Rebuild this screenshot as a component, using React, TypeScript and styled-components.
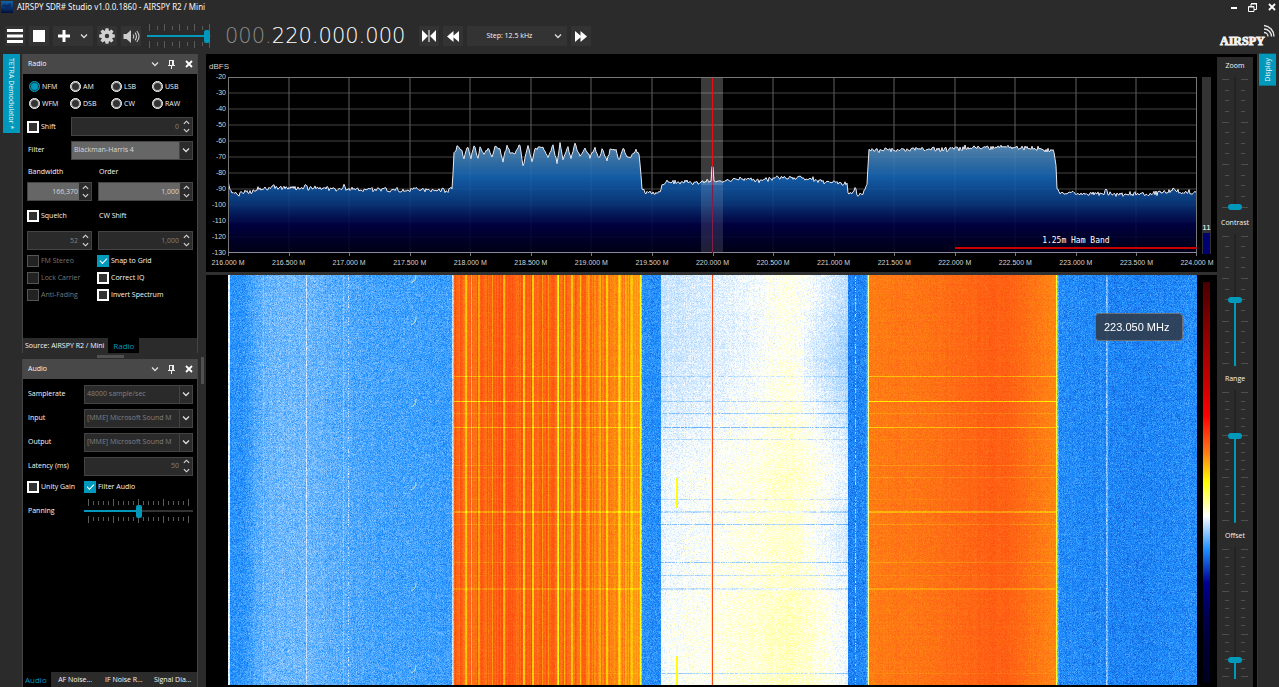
import React, { useEffect, useId, useRef, useState } from "react";
import styled, { createGlobalStyle, css } from "styled-components";

const c = {
  chrome: "#2b2b2b",
  raised: "#333333",
  header: "#484848",
  line: "#444444",
  accent: "#0099bc",
  text: "#f6f6f6",
  dim: "#777777",
};

const GlobalStyle = createGlobalStyle`
  *, *::before, *::after { box-sizing: border-box; }
  body {
    margin: 0;
    background: ${c.chrome};
    color: ${c.text};
    font: 7px/10px "Open Sans", "Noto Sans", sans-serif;
  }
  button, input, select { font: inherit; color: inherit; margin: 0; border-radius: 0; }
  button { border: 0; padding: 0; }
  svg { display: block; flex: none; }
`;

/* ---------- shell ---------- */

const Shell = styled.div`
  display: flex;
  flex-direction: column;
  height: 100vh;
  min-height: 600px;
  overflow: hidden;
`;

const TitleBar = styled.header`
  display: flex;
  align-items: center;
  justify-content: space-between;
  height: 14px;
  flex: none;
  padding: 0 2px 0 1px;
`;

const AppTitle = styled.h1`
  display: flex;
  align-items: center;
  gap: 4px;
  margin: 0;
  font-family: "Noto Sans", sans-serif;
  font-weight: 400;
  font-size: 8px;
  line-height: 14px;
`;

const WindowButtons = styled.div`
  display: flex;
  gap: 8px;
`;

const PlainButton = styled.button`
  display: grid;
  place-items: center;
  background: none;
  width: 11px;
  height: 12px;
`;

const Toolbar = styled.div`
  display: flex;
  align-items: center;
  gap: 4px;
  height: 40px;
  flex: none;
  padding: 4px 4px 0 5px;
`;

const ToolButton = styled.button`
  display: grid;
  place-items: center;
  width: 20px;
  height: 20px;
  background: ${c.raised};
`;

const SplitButton = styled.div`
  display: flex;
  justify-content: flex-end;
  background: ${c.raised};
  button:first-child { width: 22px; }
  button:last-child { width: 18px; }
`;

const Frequency = styled.output`
  margin: 0 10px 0 9px;
  font: 200 21px/24px "DejaVu Sans", sans-serif;
  color: #ffffff;
  white-space: nowrap;
`;

const MutedDigits = styled.span`
  color: #8a8a8a;
`;

const StepPicker = styled.label`
  display: grid;
  align-items: center;
  width: 100px;
  height: 20px;
  background: ${c.raised};
  > * { grid-area: 1 / 1; }
  > svg { justify-self: end; margin-right: 5px; pointer-events: none; }
`;

const StepSelect = styled.select`
  appearance: none;
  border: 0;
  background: none;
  height: 20px;
  padding: 0 16px 0 0;
  text-align: center;
`;

const Logo = styled.div`
  margin-left: auto;
`;

const VolumeSlot = styled.div`
  width: 65px;
  margin-left: 2px;
`;

const Workspace = styled.main`
  display: flex;
  flex: 1;
  min-height: 0;
`;

const DockStrip = styled.div<{ $side: "left" | "right" }>`
  width: 22px;
  flex: none;
  padding-left: ${(p) => (p.$side === "left" ? 3 : 1)}px;
  ${(p) => p.$side === "right" && css`border-left: 1px solid #3a3a3a;`}
`;

const DockTab = styled.button<{ $up?: boolean }>`
  width: 17px;
  padding: 4px 0;
  background: ${c.accent};
  line-height: 17px;
  white-space: nowrap;
  writing-mode: vertical-rl;
  ${(p) => p.$up && css`transform: rotate(180deg);`}
`;

/* ---------- side panels ---------- */

const Sidebar = styled.aside`
  display: flex;
  flex-direction: column;
  width: 176px;
  flex: none;
`;

const Splitter = styled.div<{ $vertical?: boolean }>`
  display: grid;
  place-items: center;
  flex: none;
  ${(p) => (p.$vertical ? css`width: 8px;` : css`height: 6px;`)}
  &::after {
    content: "";
    background: #505050;
    ${(p) => (p.$vertical ? css`width: 3px; height: 27px;` : css`width: 27px; height: 3px;`)}
  }
`;

const Panel = styled.section<{ $grow?: boolean }>`
  display: flex;
  flex-direction: column;
  ${(p) => (p.$grow ? css`flex: 1; min-height: 0;` : css`flex: none; height: 299px;`)}
  border: 1px solid ${c.line};
  border-width: 0 1px;
`;

const PanelHeader = styled.div`
  display: flex;
  align-items: center;
  gap: 6px;
  height: 20px;
  flex: none;
  padding: 0 3px 0 5px;
  background: ${c.header};
`;

const PanelTitle = styled.h2`
  flex: 1;
  margin: 0;
  font-size: inherit;
  font-weight: 400;
`;

const PanelBody = styled.div<{ $pad: number }>`
  flex: 1;
  min-height: 0;
  padding: ${(p) => p.$pad}px 4px 0;
  background: #000000;
`;

const Tabs = styled.div`
  display: flex;
  height: 15px;
  flex: none;
`;

const Tab = styled.button<{ $active?: boolean; $wide?: boolean; $first?: boolean }>`
  background: ${(p) => (p.$active ? "#000000" : c.chrome)};
  color: ${(p) => (p.$active ? c.accent : c.text)};
  padding: 0 ${(p) => (p.$first ? 4 : 5)}px 0 ${(p) => (p.$first ? 2 : 5)}px;
  white-space: nowrap;
  ${(p) => p.$active && css`font-size: 8px;`}
  ${(p) => p.$wide && css`flex: 1;`}
`;

const ModeGrid = styled.div`
  display: grid;
  grid-template-columns: repeat(4, 1fr);
  grid-auto-rows: 17px;
  margin: 0 0 5px 2px;
`;

const Check = styled.label<{ $off?: boolean }>`
  display: flex;
  align-items: center;
  gap: 2px;
  white-space: nowrap;
  color: ${(p) => (p.$off ? c.dim : c.text)};
`;

const RadioDot = styled.input`
  appearance: none;
  width: 11px;
  height: 11px;
  margin: 0;
  flex: none;
  border: 1px solid #ffffff;
  border-radius: 50%;
  background: ${c.raised};
  box-shadow: inset 0 0 0 1px #bbbbbb;
  &:checked {
    border-color: ${c.accent};
    background: ${c.accent};
    box-shadow: inset 0 0 0 1px #123c48;
  }
`;

const Box = styled.input`
  appearance: none;
  display: grid;
  place-items: center;
  width: 12px;
  height: 12px;
  flex: none;
  border: 2px solid #ffffff;
  background: ${c.raised};
  &:disabled { border: 1px solid #555555; background: #222222; }
  &:checked { border: 0; background: ${c.accent}; }
  &:checked::before {
    content: "";
    width: 7px;
    height: 4px;
    border: solid #ffffff;
    border-width: 0 0 1px 1px;
    transform: translateY(-1px) rotate(-45deg);
  }
`;

const FormRow = styled.div<{ $cols: string; $h: number }>`
  display: grid;
  grid-template-columns: ${(p) => p.$cols};
  align-items: center;
  column-gap: 6px;
  height: ${(p) => p.$h}px;
`;

const Caption = styled.label`
  padding-left: 1px;
  white-space: nowrap;
`;

const FieldFrame = styled.div<{ $lit?: boolean }>`
  display: flex;
  height: 19px;
  min-width: 0;
  border: 1px solid ${c.line};
  background: ${(p) => (p.$lit ? "#666666" : "#2a2a2a")};
  color: ${(p) => (p.$lit ? "#d8d8d8" : "#808080")};
`;

const NumberInput = styled.input`
  flex: 1;
  width: 0;
  min-width: 0;
  border: 0;
  padding: 0 1px;
  background: none;
  text-align: right;
`;

const SelectInput = styled.select`
  appearance: none;
  flex: 1;
  width: 0;
  min-width: 0;
  border: 0;
  padding: 0 0 0 2px;
  background: none;
  text-overflow: clip;
  opacity: 1;
`;

const Spinner = styled.div`
  display: flex;
  flex-direction: column;
  width: 12px;
  background: ${c.chrome};
  button { flex: 1; display: grid; place-items: center; background: none; }
`;

const ArrowBox = styled.span`
  display: grid;
  place-items: center;
  width: 13px;
  border-left: 1px solid ${c.line};
  background: ${c.chrome};
`;

/* ---------- sliders ---------- */

const HSlider = styled.div<{ $inset: number }>`
  display: grid;
  height: 24px;
  > * { grid-area: 1 / 1; }
  > div { margin: 0 ${(p) => p.$inset}px; }
`;

const HTicks = styled.div`
  display: flex;
  justify-content: space-between;
`;

const HTick = styled.i<{ $long: boolean }>`
  width: 1px;
  display: flex;
  flex-direction: column;
  justify-content: space-between;
  margin: ${(p) => (p.$long ? 0 : 2)}px 0;
  &::before, &::after {
    content: "";
    height: ${(p) => (p.$long ? 7 : 4)}px;
    background: #5a5a5a;
  }
`;

const HRange = styled.input<{ $fill: number }>`
  appearance: none;
  width: 100%;
  height: 24px;
  min-width: 0;
  background: linear-gradient(to right, ${c.accent} ${(p) => p.$fill}%, #333333 ${(p) => p.$fill}%) center / 100% 2px no-repeat;
  &::-webkit-slider-thumb {
    appearance: none;
    width: 6px;
    height: 13px;
    border-radius: 2px;
    background: ${c.accent};
  }
`;

const RailSlot = styled.div`
  display: flex;
  flex: none;
  background: #000000;
`;

const DisplayRail = styled.div`
  display: flex;
  flex-direction: column;
  width: 36px;
  flex: none;
  margin: 3px 4px 0 0;
  padding-bottom: 4px;
  background: ${c.chrome};
`;

const RailSection = styled.div`
  display: flex;
  flex-direction: column;
  flex: 1;
  min-height: 0;
  padding-bottom: 4px;
`;

const RailLabel = styled.label`
  height: 20px;
  line-height: 17px;
  text-align: center;
`;

const VSlider = styled.div`
  display: grid;
  flex: 1;
  min-height: 0;
  justify-items: center;
  > * { grid-area: 1 / 1; }
`;

const VTicks = styled.div`
  display: flex;
  flex-direction: column;
  justify-content: space-between;
  width: 26px;
  padding: 2px 0;
`;

const VTick = styled.i<{ $long: boolean }>`
  display: flex;
  justify-content: space-between;
  height: 1px;
  margin: 0 ${(p) => (p.$long ? 0 : 3)}px;
  &::before, &::after {
    content: "";
    width: ${(p) => (p.$long ? 7 : 4)}px;
    background: #4e4e4e;
  }
`;

const VRange = styled.input`
  appearance: none;
  writing-mode: vertical-lr;
  direction: rtl;
  width: 14px;
  height: 100%;
  min-height: 0;
  &::-webkit-slider-thumb {
    appearance: none;
    width: 14px;
    height: 6px;
    border-radius: 3px;
    background: ${c.accent};
  }
`;

/* ---------- spectrum and waterfall ---------- */

const Scope = styled.div`
  display: flex;
  flex: 1;
  min-width: 0;
  flex-direction: column;
  background: #000000;
  font: 7px/8px "Liberation Sans", Arial, sans-serif;
  color: #d4d4d4;
`;

const ScopeRow = styled.div<{ $grow?: boolean }>`
  display: grid;
  grid-template-columns: 22px minmax(0, 1fr) 20px;
  ${(p) => p.$grow && css`flex: 1; min-height: 0; padding-bottom: 2px;`}
`;

const Unit = styled.div`
  height: 23px;
  padding: 9px 0 0 3px;
  font-size: 8px;
`;

const DbScale = styled.div`
  display: flex;
  flex-direction: column;
  justify-content: space-between;
  height: 184px;
  margin-top: -4px;
  padding-right: 2px;
  text-align: right;
`;

const Plot = styled.div`
  position: relative;
  height: 180px;
  min-width: 0;
`;

const PlotSvg = styled.svg`
  width: 100%;
  height: 180px;
`;

const Band = styled.div`
  position: absolute;
  left: 75%;
  right: 0;
  bottom: 8px;
  border-bottom: 2px solid #c80000;
  padding-bottom: 1px;
  text-align: center;
  font: 8px/10px "DejaVu Sans Mono", monospace;
  color: #ffffff;
`;

const FreqScale = styled.div`
  display: flex;
  justify-content: space-between;
  height: 15px;
  margin: 0 20px 0 22px;
  padding-top: 2px;
  white-space: nowrap;
  span { width: 0; display: flex; justify-content: center; }
`;

const Divider = styled.div`
  height: 3px;
  flex: none;
  background: #303030;
`;

const Meter = styled.div`
  display: flex;
  flex-direction: column;
  justify-content: flex-end;
  width: 9px;
  height: 177px;
  margin-left: 5px;
  background: ${c.raised};
  color: #ffffff;
  font-size: 8px;
  text-align: center;
  &::after { content: ""; height: 21px; margin: 1px 1px 0; background: #000070; }
`;

const FallBox = styled.div`
  position: relative;
  min-height: 0;
`;

const FallCanvas = styled.canvas`
  display: block;
  width: 100%;
  height: 100%;
`;

const Palette = styled.div`
  width: 7px;
  margin: 7px 0 2px 6px;
  background: linear-gradient(
    #4a0000, #750000, #9f0000, #c60000, #ff0000, #fe6d16, #ffff00,
    #ffffff, #1e90ff, #000091, #000050, #000030, #000020
  );
`;

const Readout = styled.div`
  position: absolute;
  top: 38px;
  right: 14px;
  width: 88px;
  padding: 0 8px;
  border: 1px solid #6b6f78;
  border-radius: 4px;
  background: rgba(48, 60, 76, 0.9);
  color: #ffffff;
  font-size: 11px;
  line-height: 26px;
  white-space: nowrap;
`;

/* ---------- icons ---------- */

const Chevron = ({ up, size = 8 }: { up?: boolean; size?: number }) => (
  <svg width={size} height={size} viewBox="0 0 8 8" fill="none" stroke="#dddddd" strokeWidth="1.3">
    <path d={up ? "M1 5.5 4 2.5 7 5.5" : "M1 2.5 4 5.5 7 2.5"} />
  </svg>
);

const CloseIcon = () => (
  <svg width="8" height="8" viewBox="0 0 8 8" stroke="#ffffff" strokeWidth="1.8">
    <path d="M1 1 7 7M7 1 1 7" />
  </svg>
);

const PinIcon = () => (
  <svg width="7" height="9" viewBox="0 0 7 9" fill="none" stroke="#eeeeee">
    <path d="M1.500 .5H5.500M1.500 0V5M4.500 0V5M5.500 0V5M0 5.500H7M3.500 5V9" />
  </svg>
);

const AppIcon = () => (
  <svg width="12" height="12" viewBox="0 0 12 12">
    <defs>
      <linearGradient id="appicon" x1="0" y1="0" x2="0" y2="1">
        <stop offset="0" stopColor="#1462a8" />
        <stop offset="1" stopColor="#00103c" />
      </linearGradient>
    </defs>
    <rect width="12" height="12" fill="url(#appicon)" />
    <path d="M1 5q2-3 5-1l4-2-1 4 1 3-3-1-3 1 1-2z" fill="#0a2c66" />
  </svg>
);

const GearIcon = () => (
  <svg width="16" height="16" viewBox="-8 -8 16 16" fill="#d0d0d0">
    {[0, 45, 90, 135].map((a) => (
      <path key={a} d="M-1.400-7.800H1.400L2-5V5L1.400 7.800H-1.400L-2 5V-5z" transform={`rotate(${a})`} />
    ))}
    <circle r="5.600" />
    <circle r="2.200" fill="#333333" />
  </svg>
);

const SpeakerIcon = () => (
  <svg width="17" height="15" viewBox="0 0 17 15" fill="none" stroke="#cccccc" strokeWidth="1.100">
    <path d="M.5 5H3.500L8 1V14L3.500 10H.5z" fill="#cccccc" stroke="none" />
    <path d="M10 5.500q1.500 2 0 4M12 3.700q3 3.800 0 7.600M13.800 2q4.400 5.500 0 11" />
  </svg>
);

const AirspyLogo = () => (
  <svg width="56" height="24" viewBox="0 0 56 24" role="img" aria-label="AIRSPY">
    <text x="1" y="21" fill="#f4f4f4" stroke="#f4f4f4" strokeWidth=".9" fontSize="12" fontWeight="700" fontFamily='"Liberation Serif", serif'>
      AIRSPY
    </text>
    <path d="M45 8.500a4 4 0 0 1 4 4M45 5a7.500 7.500 0 0 1 7.500 7.500M45 1.500a11 11 0 0 1 10 11" fill="none" stroke="#e4e4e4" strokeWidth="1.400" />
  </svg>
);

/* ---------- signal model ---------- */

const SPAN = 969;
const rng = (seed: number) => () => {
  seed = (seed + 0x6d2b79f5) | 0;
  let t = Math.imul(seed ^ (seed >>> 15), 1 | seed);
  t = (t + Math.imul(t ^ (t >>> 7), 61 | t)) ^ t;
  return ((t ^ (t >>> 14)) >>> 0) / 4294967296;
};

type Pt = [number, number];
const lerp = (pts: Pt[], x: number) => {
  if (x <= pts[0][0]) return pts[0][1];
  for (let i = 1; i < pts.length; i++) {
    if (x <= pts[i][0]) {
      const [x0, y0] = pts[i - 1];
      const [x1, y1] = pts[i];
      return y0 + ((y1 - y0) * (x - x0)) / (x1 - x0);
    }
  }
  return pts[pts.length - 1][1];
};

// Trace outline: position across the span, depth below -20 dBFS.
const TRACE: Pt[] = [
  [0, 104], [2, 113], [4, 116], [10, 117], [18, 115], [34, 111], [60, 110], [76, 111], [78, 106], [80, 111], [114, 112], [116, 108], [118, 112],
  [180, 113], [188, 111], [190, 113], [222, 113], [224, 111], [225, 96], [226, 76], [229, 70], [233, 72], [236, 81], [240, 69], [243, 82], [246, 69],
  [250, 82], [252, 69], [256, 77], [260, 71], [264, 80], [267, 70], [272, 72], [275, 85], [279, 68], [282, 75], [287, 76], [292, 67], [295, 89],
  [300, 69], [304, 85], [307, 71], [315, 70], [320, 81], [325, 68], [329, 86], [332, 66], [335, 82], [340, 70], [343, 82], [347, 67], [352, 80],
  [357, 71], [362, 80], [367, 70], [371, 82], [374, 73], [379, 84], [382, 72], [388, 74], [391, 84], [395, 71], [399, 80], [403, 80], [408, 73],
  [411, 78], [412, 87], [414, 112], [417, 115], [432, 116], [434, 108], [439, 105], [469, 106], [483, 104], [484, 89], [485, 89], [486, 104], [502, 104],
  [510, 101], [532, 104], [557, 100], [575, 101], [595, 105], [605, 105], [619, 108], [620, 117], [626, 116], [627, 110], [629, 118], [635, 116],
  [639, 108], [641, 73], [702, 72], [757, 71], [777, 70], [812, 72], [826, 75], [828, 88], [829, 112], [832, 116], [867, 117], [876, 117],
  [878, 110], [880, 117], [922, 117], [948, 113], [952, 116], [968, 116],
];

const buildTrace = () => {
  const r = rng(7);
  let d = "";
  for (let x = 0; x < SPAN; x++) {
    const comb = x > 226 && x < 411;
    const jitter = (r() + r() + r() - 1.5) * (comb ? 1.6 : 2.4);
    d += `${x ? "L" : "M"}${x} ${(lerp(TRACE, x) + jitter).toFixed(1)}`;
  }
  return d;
};
const TRACE_PATH = buildTrace();

const STOPS = [
  [0, 0, 32], [0, 0, 48], [0, 0, 80], [0, 0, 145], [30, 144, 255], [255, 255, 255], [255, 255, 0],
  [254, 109, 22], [255, 0, 0], [198, 0, 0], [159, 0, 0], [117, 0, 0], [74, 0, 0],
];

// Level across the span, in palette steps.
const LEVEL: Pt[] = [
  [0, 4.9], [1, 4.9], [2, 4.02], [16, 4.06], [30, 4.26], [50, 4.36], [80, 4.35], [110, 4.25], [150, 4.17], [223, 4.12], [224, 4.7],
  [225, 6.4], [226, 7.1], [300, 7.16], [340, 7.08], [370, 6.92], [400, 6.76], [411, 6.6], [412, 5.9], [413, 4.5], [414, 4.02], [431, 4.0],
  [432, 4.05], [433, 4.9], [460, 4.95], [480, 4.98], [500, 5.04], [530, 5.09], [545, 5.14], [557, 5.18], [578, 5.12], [595, 5.0], [619, 4.85],
  [620, 3.92], [637, 3.95], [639, 4.3], [640, 5.5], [641, 6.9], [700, 6.96], [740, 7.06], [760, 7.12], [777, 7.12], [800, 6.98], [827, 6.82],
  [828, 5.8], [829, 4.4], [831, 3.98], [880, 3.93], [920, 3.92], [968, 3.99],
];
// [position, width, change of level]
const STRIPES: [number, number, number][] = [
  [35, 1, 0.14], [78, 1, 0.36], [115, 1, 0.2], [237, 2, -0.55], [243, 1, -0.6], [250, 2, -0.5], [258, 1, -0.3], [264, 1, -0.5], [275, 2, -0.7],
  [295, 2, -0.85], [304, 2, -0.8], [314, 1, -0.3], [320, 1, -0.4], [329, 2, -0.95], [336, 1, -0.55], [343, 2, -0.65], [352, 1, -0.4],
  [360, 2, -0.3], [371, 2, -0.45], [378, 2, -0.4], [390, 3, -0.45], [397, 1, -0.25], [403, 2, -0.3], [878, 2, 0.4], [872, 1, 0.12],
];
// [row, rows tall, orange-band change, pale-band change]
const STREAKS: [number, number, number, number][] = [
  [101, 1, 0.5, 0.25], [126, 1, 0.8, 0.32], [138, 1, 0.2, 0.4], [152, 1, 0.55, 0.55], [164, 1, 0.1, 0.3], [190, 1, 0.22, 0],
  [202, 1, 0.18, 0], [224, 1, 0.05, 0.25], [236, 2, 0.42, 0.28], [249, 1, 0.2, 0.5], [287, 1, 0.25, 0.5], [300, 1, 0.1, 0.35],
  [313, 2, 0.28, 0.28], [398, 1, 0.1, 0.4],
];
// Slow drift of the pale band with age.
const DRIFT: Pt[] = [[0, -0.14], [60, -0.17], [110, -0.12], [160, -0.04], [200, 0.03], [250, 0.02], [290, 0.03], [350, 0.1], [409, 0.07]];

const drawFall = (cv: HTMLCanvasElement) => {
  const w = Math.max(1, cv.clientWidth);
  const h = Math.max(1, cv.clientHeight);
  cv.width = w;
  cv.height = h;
  const g = cv.getContext("2d");
  if (!g) return;
  const r = rng(21);
  const img = g.createImageData(w, h);
  const cols: number[] = [];
  for (let px = 0; px < w; px++) {
    const x = (px * SPAN) / w;
    let t = lerp(LEVEL, x) + (r() - 0.5) * (x > 226 && x < 411 ? 0.36 : 0.06);
    for (const [sx, sw, dv] of STRIPES) if (x >= sx && x < sx + sw) t += dv;
    cols.push(t);
  }
  for (let y = 0; y < h; y++) {
    const row = (r() - 0.5) * 0.04;
    const streak = STREAKS.find((s) => y >= s[0] && y < s[0] + s[1]);
    const fade = lerp(DRIFT, y);
    for (let px = 0; px < w; px++) {
      const x = (px * SPAN) / w;
      let t = cols[px] + row;
      const n = r() + r() + r() - 1.5;
      const pale = x >= 433 && x < 620;
      const hot = (x >= 226 && x < 412) || (x >= 640 && x < 828);
      if (hot) {
        t += n * 0.12;
        if (streak) t -= streak[2];
      } else if (pale) {
        const centre = Math.max(0, 1 - Math.abs(x - 557) / 55);
        t += fade * (fade < 0 ? 1 - centre * 0.4 : 1) + n * 0.17;
        if (x > 575) t -= 0.12 * Math.max(0, 1 - Math.abs(y - 90) / 70) + 0.08 * Math.max(0, 1 - Math.abs(y - 260) / 50);
        if (streak && r() > 0.12) t -= streak[3];
      } else {
        t += n * 0.24;
        if (x >= 120 && x < 121 && r() > 0.55) t += 0.45;
        if (x >= 627 && x < 628 && r() > 0.45) t += 0.6;
        if (x >= 878 && x < 879 && r() > 0.6) t += 0.3;
      }
      if (x >= 448 && x < 450 && ((y > 202 && y < 233) || y > 380)) t = 5.95;
      if (x >= 483 && x < 484) t = 5.8;
      t = Math.max(3.4, Math.min(8.2, t));
      const i = Math.floor(t);
      const f = t - i;
      const a = STOPS[i];
      const b = STOPS[i + 1];
      const o = (y * w + px) * 4;
      for (let k = 0; k < 3; k++) img.data[o + k] = a[k] + (b[k] - a[k]) * f;
      img.data[o + 3] = 255;
    }
  }
  g.putImageData(img, 0, 0);
  const k = w / SPAN;
  g.fillStyle = "#ff4a10";
  g.fillRect(Math.round(484 * k), 0, 1, h);
  g.fillStyle = "rgba(40,160,180,.5)";
  g.fillRect(Math.round(843 * k), 0, 1, h);
  g.fillRect(Math.round(863 * k), 0, 1, h);
  g.strokeStyle = "#d8e8b0";
  for (const y of [0, 42, 124, 207, 308, 390]) {
    g.beginPath();
    g.moveTo(188 * k, y);
    g.quadraticCurveTo(188 * k, y + 6, 183 * k, y + 8);
    g.stroke();
  }
};

/* ---------- composed controls ---------- */

const Toggle = ({ label, on, off }: { label: string; on?: boolean; off?: boolean }) => (
  <Check $off={off}>
    <Box type="checkbox" defaultChecked={on} disabled={off} />
    {label}
  </Check>
);

const NumField = ({ id, name, value, lit }: { id?: string; name?: string; value: string; lit?: boolean }) => (
  <FieldFrame $lit={lit}>
    <NumberInput id={id} aria-label={name} type="text" inputMode="numeric" defaultValue={value} />
    <Spinner>
      <button type="button" aria-label="Increase"><Chevron up size={7} /></button>
      <button type="button" aria-label="Decrease"><Chevron size={7} /></button>
    </Spinner>
  </FieldFrame>
);

const PickField = ({ id, value, lit }: { id: string; value: string; lit?: boolean }) => (
  <FieldFrame $lit={lit}>
    <SelectInput id={id} defaultValue={value}><option>{value}</option></SelectInput>
    <ArrowBox><Chevron /></ArrowBox>
  </FieldFrame>
);

const Horizontal = ({ id, name, initial, ticks, every, inset }: {
  id?: string; name?: string; initial: number; ticks: number; every: number; inset: number;
}) => {
  const [v, setV] = useState(initial);
  return (
    <HSlider $inset={inset}>
      <HTicks>{Array.from({ length: ticks }, (_, i) => <HTick key={i} $long={i % every === 0} />)}</HTicks>
      <HRange id={id} aria-label={name} type="range" value={v} $fill={v} onChange={(e) => setV(+e.target.value)} />
    </HSlider>
  );
};

const Vertical = ({ name, initial, ticks, every }: { name: string; initial: number; ticks: number; every: number }) => {
  const id = useId();
  const [v, setV] = useState(initial);
  const fill = `calc(3px + (100% - 6px) * ${v / 100})`;
  return (
    <RailSection>
      <RailLabel htmlFor={id}>{name}</RailLabel>
      <VSlider>
        <VTicks>{Array.from({ length: ticks }, (_, i) => <VTick key={i} $long={i % every === 0} />)}</VTicks>
        <VRange
          id={id}
          type="range"
          value={v}
          onChange={(e) => setV(+e.target.value)}
          style={{ background: `linear-gradient(to top, ${c.accent} ${fill}, #222222 ${fill}) center / 2px 100% no-repeat` }}
        />
      </VSlider>
    </RailSection>
  );
};

const Head = ({ title }: { title: string }) => (
  <PanelHeader>
    <PanelTitle>{title}</PanelTitle>
    <PlainButton type="button" aria-label={`${title} menu`}><Chevron /></PlainButton>
    <PlainButton type="button" aria-label={`Pin ${title}`}><PinIcon /></PlainButton>
    <PlainButton type="button" aria-label={`Close ${title}`}><CloseIcon /></PlainButton>
  </PanelHeader>
);

const MODES = ["NFM", "AM", "LSB", "USB", "WFM", "DSB", "CW", "RAW"];

const RadioPanel = () => (
  <Panel>
    <Head title="Radio" />
    <PanelBody $pad={4}>
      <ModeGrid role="radiogroup" aria-label="Mode">
        {MODES.map((m) => (
          <Check key={m}>
            <RadioDot type="radio" name="mode" defaultChecked={m === "NFM"} />
            {m}
          </Check>
        ))}
      </ModeGrid>
      <FormRow $cols="38px 1fr" $h={19}>
        <Toggle label="Shift" />
        <NumField name="Shift" value="0" />
      </FormRow>
      <FormRow $cols="38px 1fr" $h={28}>
        <Caption htmlFor="filter">Filter</Caption>
        <PickField id="filter" value="Blackman-Harris 4" lit />
      </FormRow>
      <FormRow $cols="65px 1fr" $h={16}>
        <Caption htmlFor="bandwidth">Bandwidth</Caption>
        <Caption htmlFor="order">Order</Caption>
      </FormRow>
      <FormRow $cols="65px 1fr" $h={23}>
        <NumField id="bandwidth" value="166,370" lit />
        <NumField id="order" value="1,000" lit />
      </FormRow>
      <FormRow $cols="65px 1fr" $h={26}>
        <Toggle label="Squelch" />
        <Caption htmlFor="cwshift">CW Shift</Caption>
      </FormRow>
      <FormRow $cols="65px 1fr" $h={23}>
        <NumField name="Squelch" value="52" />
        <NumField id="cwshift" value="1,000" />
      </FormRow>
      <FormRow $cols="64px 1fr" $h={17}>
        <Toggle label="FM Stereo" off />
        <Toggle label="Snap to Grid" on />
      </FormRow>
      <FormRow $cols="64px 1fr" $h={17}>
        <Toggle label="Lock Carrier" off />
        <Toggle label="Correct IQ" />
      </FormRow>
      <FormRow $cols="64px 1fr" $h={17}>
        <Toggle label="Anti-Fading" off />
        <Toggle label="Invert Spectrum" />
      </FormRow>
    </PanelBody>
    <Tabs>
      <Tab type="button" $first>Source: AIRSPY R2 / Mini</Tab>
      <Tab type="button" $active>Radio</Tab>
    </Tabs>
  </Panel>
);

const AudioPanel = () => (
  <Panel $grow>
    <Head title="Audio" />
    <PanelBody $pad={3}>
      <FormRow $cols="51px 1fr" $h={24}>
        <Caption htmlFor="rate">Samplerate</Caption>
        <PickField id="rate" value="48000 sample/sec" />
      </FormRow>
      <FormRow $cols="51px 1fr" $h={24}>
        <Caption htmlFor="input">Input</Caption>
        <PickField id="input" value="[MME] Microsoft Sound M" />
      </FormRow>
      <FormRow $cols="51px 1fr" $h={24}>
        <Caption htmlFor="output">Output</Caption>
        <PickField id="output" value="[MME] Microsoft Sound M" />
      </FormRow>
      <FormRow $cols="51px 1fr" $h={24}>
        <Caption htmlFor="latency">Latency (ms)</Caption>
        <NumField id="latency" value="50" />
      </FormRow>
      <FormRow $cols="51px 1fr" $h={17}>
        <Toggle label="Unity Gain" />
        <Toggle label="Filter Audio" on />
      </FormRow>
      <FormRow $cols="51px 1fr" $h={32}>
        <Caption htmlFor="pan">Panning</Caption>
        <Horizontal id="pan" initial={50} ticks={21} every={5} inset={4} />
      </FormRow>
    </PanelBody>
    <Tabs>
      <Tab type="button" $active $first>Audio</Tab>
      <Tab type="button" $wide>AF Noise...</Tab>
      <Tab type="button" $wide>IF Noise R...</Tab>
      <Tab type="button" $wide>Signal Dia...</Tab>
    </Tabs>
  </Panel>
);

const Spectrum = () => (
  <Plot>
    <PlotSvg viewBox="0 0 969 180" preserveAspectRatio="none">
      <defs>
        <linearGradient id="fill" x1="0" y1="0" x2="0" y2="176" gradientUnits="userSpaceOnUse">
          <stop offset=".38" stopColor="#5f93bf" />
          <stop offset=".46" stopColor="#3f7db4" />
          <stop offset=".57" stopColor="#1565b5" />
          <stop offset=".7" stopColor="#0b4088" />
          <stop offset=".84" stopColor="#000044" />
          <stop offset="1" stopColor="#000018" />
        </linearGradient>
      </defs>
      {Array.from({ length: 10 }, (_, i) => (
        <path key={i} d={`M0 ${16 * (i + 1)}H969`} stroke="#444444" />
      ))}
      {Array.from({ length: 15 }, (_, i) => i !== 7 && (
        <path key={i} d={`M${Math.round((969 / 16) * (i + 1))} 0V176`} stroke="#606060" />
      ))}
      <path d={`${TRACE_PATH}V176H0Z`} fill="url(#fill)" fillOpacity=".9" />
      <path d={TRACE_PATH} fill="none" stroke="#e8e8f0" />
      <path d="M0 .5H969M.5 0V176M968.500 0V176" stroke="#777777" fill="none" />
      <path d="M0 175.500H969" stroke="#8a8a9a" />
      {Array.from({ length: 17 }, (_, i) => (
        <path key={i} d={`M${Math.min(968, Math.round((969 / 16) * i)) + 0.5} 176v3`} stroke="#777777" />
      ))}
      <path d="M484.500 89V176" stroke="#700030" />
      <rect x="473" y="1" width="22" height="107" fill="#ffffff" fillOpacity=".23" />
      <rect x="473" y="108" width="22" height="67" fill="#ffffff" fillOpacity=".12" />
      <path d="M484.500 1V89" stroke="#e81010" />
    </PlotSvg>
    <Band>1.25m Ham Band</Band>
  </Plot>
);

const Waterfall = () => {
  const ref = useRef<HTMLCanvasElement>(null);
  useEffect(() => {
    const paint = () => ref.current && drawFall(ref.current);
    paint();
    window.addEventListener("resize", paint);
    return () => window.removeEventListener("resize", paint);
  }, []);
  return (
    <FallBox>
      <FallCanvas ref={ref} aria-label="Waterfall" />
      <Readout>223.050 MHz</Readout>
    </FallBox>
  );
};

export default function App() {
  return (
    <Shell>
      <GlobalStyle />
      <TitleBar>
        <AppTitle><AppIcon />AIRSPY SDR# Studio v1.0.0.1860 - AIRSPY R2 / Mini</AppTitle>
        <WindowButtons>
          <PlainButton type="button" aria-label="Minimize">
            <svg width="8" height="8" viewBox="0 0 8 8"><path d="M1 4H7V6H1z" fill="#ffffff" /></svg>
          </PlainButton>
          <PlainButton type="button" aria-label="Restore">
            <svg width="9" height="9" viewBox="0 0 9 9" fill="none" stroke="#ffffff"><path d="M.5 3.500H6V8.500H.5zM.5 4H6M3 3V1H8.500V6.500H6M3 .5H9" /></svg>
          </PlainButton>
          <PlainButton type="button" aria-label="Close"><CloseIcon /></PlainButton>
        </WindowButtons>
      </TitleBar>

      <Toolbar>
        <ToolButton type="button" aria-label="Menu">
          <svg width="16" height="14" viewBox="0 0 16 14" fill="#ffffff"><path d="M0 0H16V3H0zM0 5.500H16V8.500H0zM0 11H16V14H0z" /></svg>
        </ToolButton>
        <ToolButton type="button" aria-label="Stop">
          <svg width="12" height="12" viewBox="0 0 12 12"><path d="M0 0H12V12H0z" fill="#ffffff" /></svg>
        </ToolButton>
        <SplitButton>
          <ToolButton type="button" aria-label="Add">
            <svg width="12" height="12" viewBox="0 0 12 12"><path d="M4.500 0H7.500V4.500H12V7.500H7.500V12H4.500V7.500H0V4.500H4.500z" fill="#ffffff" /></svg>
          </ToolButton>
          <ToolButton type="button" aria-label="Add options"><Chevron /></ToolButton>
        </SplitButton>
        <ToolButton type="button" aria-label="Settings"><GearIcon /></ToolButton>
        <ToolButton type="button" aria-label="Mute"><SpeakerIcon /></ToolButton>
        <VolumeSlot><Horizontal name="Volume" initial={97} ticks={9} every={2} inset={2} /></VolumeSlot>
        <Frequency><MutedDigits>000.</MutedDigits>220.000.000</Frequency>
        <ToolButton type="button" aria-label="Center">
          <svg width="14" height="12" viewBox="0 0 14 12" fill="#ffffff"><path d="M0 0 6 6 0 12zM14 0 8 6 14 12zM6.500 0H7.500V12H6.500z" /></svg>
        </ToolButton>
        <ToolButton type="button" aria-label="Step down">
          <svg width="12" height="11" viewBox="0 0 12 11" fill="#ffffff"><path d="M6.500 0V11L0 5.500zM12 0V11L5.500 5.500z" /></svg>
        </ToolButton>
        <StepPicker>
          <StepSelect aria-label="Step"><option>Step: 12.5 kHz</option></StepSelect>
          <Chevron />
        </StepPicker>
        <ToolButton type="button" aria-label="Step up">
          <svg width="12" height="11" viewBox="0 0 12 11" fill="#ffffff"><path d="M0 0V11L6.500 5.500zM5.500 0V11L12 5.500z" /></svg>
        </ToolButton>
        <Logo><AirspyLogo /></Logo>
      </Toolbar>

      <Workspace>
        <DockStrip $side="left"><DockTab type="button">TETRA Demodulator *</DockTab></DockStrip>
        <Sidebar>
          <RadioPanel />
          <Splitter />
          <AudioPanel />
        </Sidebar>
        <Splitter $vertical />
        <Scope>
          <Unit>dBFS</Unit>
          <ScopeRow>
            <DbScale>{Array.from({ length: 12 }, (_, i) => <span key={i}>{-20 - i * 10}</span>)}</DbScale>
            <Spectrum />
            <Meter>11</Meter>
          </ScopeRow>
          <FreqScale>
            {Array.from({ length: 17 }, (_, i) => <span key={i}>{(216 + i * 0.5).toFixed(3)} M</span>)}
          </FreqScale>
          <Divider />
          <ScopeRow $grow>
            <span />
            <Waterfall />
            <Palette />
          </ScopeRow>
        </Scope>
        <RailSlot>
          <DisplayRail>
            <Vertical name="Zoom" initial={0} ticks={13} every={4} />
            <Vertical name="Contrast" initial={50} ticks={13} every={4} />
            <Vertical name="Range" initial={66} ticks={16} every={5} />
            <Vertical name="Offset" initial={13} ticks={16} every={5} />
          </DisplayRail>
        </RailSlot>
        <DockStrip $side="right"><DockTab type="button" $up>Display</DockTab></DockStrip>
      </Workspace>
    </Shell>
  );
}
